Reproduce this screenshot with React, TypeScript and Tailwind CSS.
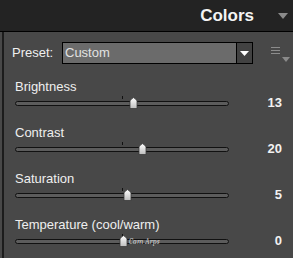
const sliders = [
  { label: "Brightness", value: 13, pos: 118 },
  { label: "Contrast", value: 20, pos: 127 },
  { label: "Saturation", value: 5, pos: 112 },
  { label: "Temperature (cool/warm)", value: 0, pos: 108 },
];

const Thumb = () => (
  <svg width="9" height="12" viewBox="0 0 9 12" className="block">
    <defs>
      <linearGradient id="thumbFill" x1="0" y1="0" x2="0" y2="1">
        <stop offset="0" stopColor="#ffffff" />
        <stop offset="1" stopColor="#bdbdbd" />
      </linearGradient>
    </defs>
    <path
      d="M1 11.5 V4.5 Q1 3 2.5 2 L4.5 0.6 L6.5 2 Q8 3 8 4.5 V11.5 Z"
      fill="url(#thumbFill)"
      stroke="#3a3a3a"
      strokeWidth="0.8"
    />
  </svg>
);

const SliderRow = ({ label, value, pos }: { label: string; value: number; pos: number }) => (
  <div className="flex flex-col">
    <div className="h-[15px] text-[13px] leading-[15px] text-[#efefef]">{label}</div>
    <div className="mt-[2px] flex h-[14px] items-center">
      <div className="relative h-[14px] w-[214px]">
        {/* track */}
        <div className="absolute left-0 right-0 top-[5px] h-[5px] rounded-full border border-[#111] bg-[#5c5c5c]" />
        {/* zero tick */}
        <div className="absolute left-[107px] top-[0px] h-[3px] w-px bg-[#111]" />
        <div className="absolute top-[1px]" style={{ left: pos - 4 }}>
          <Thumb />
        </div>
        {value === 0 && (
          // watermark left in the source screenshot
          <span className="absolute left-[114px] top-[2px] font-serif text-[8px] italic text-white/70">
            Cam Arps
          </span>
        )}
      </div>
      <div className="flex-1 text-right text-[13px] font-bold text-[#f2f2f2]">{value}</div>
    </div>
  </div>
);

export default function App() {
  return (
    <div
      className="h-[258px] w-[293px] overflow-hidden bg-[#484848]"
      style={{ fontFamily: '"Liberation Sans", Arial, sans-serif' }}
    >
      <div className="flex h-[32px] items-center justify-end border-b border-black bg-[#232323] pr-[5px]">
        <span className="text-[17px] font-bold text-[#f4f4f4]">Colors</span>
        <svg width="10" height="6" viewBox="0 0 10 6" className="ml-[24px] mt-[1px]">
          <path d="M0 0 H10 L5 6 Z" fill="#8a8a8a" />
        </svg>
      </div>

      <div className="ml-[2px] h-full border-l-2 border-[#1c1c1c]">
        <div className="flex items-center pl-[8px] pt-[10px]">
          <span className="w-[50px] text-[13px] text-[#efefef]">Preset:</span>
          <div className="flex h-[22px] w-[191px] border border-black bg-[#6b6b6b]">
            <span className="flex-1 pl-[2px] text-[13px] leading-[20px] text-[#e2e2e2]">Custom</span>
            <div className="flex w-[16px] items-center justify-center border-l border-black bg-[#424242]">
              <svg width="9" height="5" viewBox="0 0 9 5">
                <path d="M0 0 H9 L4.5 5 Z" fill="#ffffff" />
              </svg>
            </div>
          </div>
          <div className="relative ml-[18px] h-[22px] w-[20px]">
            <div className="absolute left-0 top-[5px] flex flex-col gap-[2px]">
              <div className="h-px w-[9px] bg-[#8c8c8c]" />
              <div className="h-px w-[9px] bg-[#8c8c8c]" />
              <div className="h-px w-[9px] bg-[#8c8c8c]" />
            </div>
            <svg width="8" height="5" viewBox="0 0 8 5" className="absolute left-[11px] top-[15px]">
              <path d="M0 0 H8 L4 5 Z" fill="#8a8a8a" />
            </svg>
          </div>
        </div>

        <div className="mt-[15px] flex flex-col gap-[15px] pl-[11px] pr-[11px]">
          {sliders.map((s) => (
            <SliderRow key={s.label} {...s} />
          ))}
        </div>
      </div>
    </div>
  );
}
